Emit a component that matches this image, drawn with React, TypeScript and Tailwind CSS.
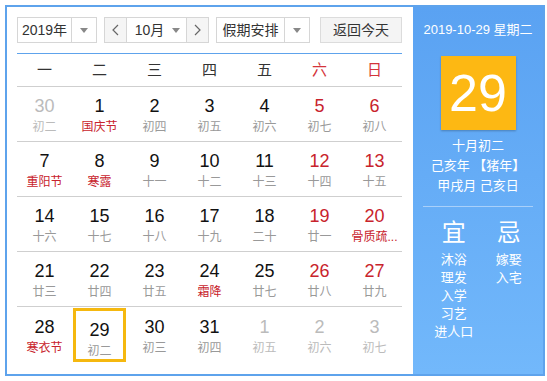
import React from "react";

type Day = { n: number; l: string; other?: boolean; red?: boolean; fest?: boolean; sel?: boolean };

const weeks: Day[][] = [
  [
    { n: 30, l: "初二", other: true },
    { n: 1, l: "国庆节", fest: true },
    { n: 2, l: "初四" },
    { n: 3, l: "初五" },
    { n: 4, l: "初六" },
    { n: 5, l: "初七", red: true },
    { n: 6, l: "初八", red: true },
  ],
  [
    { n: 7, l: "重阳节", fest: true },
    { n: 8, l: "寒露", fest: true },
    { n: 9, l: "十一" },
    { n: 10, l: "十二" },
    { n: 11, l: "十三" },
    { n: 12, l: "十四", red: true },
    { n: 13, l: "十五", red: true },
  ],
  [
    { n: 14, l: "十六" },
    { n: 15, l: "十七" },
    { n: 16, l: "十八" },
    { n: 17, l: "十九" },
    { n: 18, l: "二十" },
    { n: 19, l: "廿一", red: true },
    { n: 20, l: "骨质疏...", red: true, fest: true },
  ],
  [
    { n: 21, l: "廿三" },
    { n: 22, l: "廿四" },
    { n: 23, l: "廿五" },
    { n: 24, l: "霜降", fest: true },
    { n: 25, l: "廿七" },
    { n: 26, l: "廿八", red: true },
    { n: 27, l: "廿九", red: true },
  ],
  [
    { n: 28, l: "寒衣节", fest: true },
    { n: 29, l: "初二", sel: true },
    { n: 30, l: "初三" },
    { n: 31, l: "初四" },
    { n: 1, l: "初五", other: true },
    { n: 2, l: "初六", other: true },
    { n: 3, l: "初七", other: true },
  ],
];

const font = { fontFamily: '"Liberation Sans", "Noto Sans CJK SC", sans-serif' };

function Caret() {
  return (
    <svg width="8" height="5" viewBox="0 0 8 5">
      <path d="M0 0h8L4 5z" fill="#888" />
    </svg>
  );
}

function Chevron({ dir }: { dir: "l" | "r" }) {
  return (
    <svg width="7" height="12" viewBox="0 0 7 12">
      <path d={dir === "l" ? "M6 1L1 6l5 5" : "M1 1l5 5-5 5"} fill="none" stroke="#666" strokeWidth="1.2" />
    </svg>
  );
}

export default function App() {
  return (
    <div className="bg-white w-[547px] h-[381px] p-[5px]" style={font}>
      <div className="flex w-[540px] h-[371px] border-2 border-[#5ea3ec]">
        <div className="w-[406px] pl-[10px] pr-[11px] pt-[10px]">
          <div className="flex h-[26px] text-[14px] leading-none text-[#333]">
            <div className="flex w-[80px] border border-[#d6d6d6]">
              <div className="flex flex-1 items-center justify-center border-r border-[#d6d6d6]">2019年</div>
              <div className="flex w-[24px] items-center justify-center"><Caret /></div>
            </div>
            <div className="ml-[7px] flex w-[105px] border border-[#d6d6d6]">
              <div className="flex w-[22px] items-center justify-center border-r border-[#d6d6d6] bg-[#f5f5f5]"><Chevron dir="l" /></div>
              <div className="flex flex-1 items-center justify-center gap-[8px] pl-[2px]">10月<Caret /></div>
              <div className="flex w-[22px] items-center justify-center border-l border-[#d6d6d6] bg-[#f5f5f5]"><Chevron dir="r" /></div>
            </div>
            <div className="ml-[7px] flex w-[94px] border border-[#d6d6d6]">
              <div className="flex flex-1 items-center justify-center border-r border-[#d6d6d6]">假期安排</div>
              <div className="flex w-[24px] items-center justify-center"><Caret /></div>
            </div>
            <div className="ml-[10px] flex w-[82px] items-center justify-center border border-[#dcdcdc] bg-[#f4f4f4]">返回今天</div>
          </div>
          <div className="mt-[10px] border-t border-[#5ea3ec]" />
          <div className="grid h-[33px] grid-cols-7 border-b border-[#cfcfcf] text-[15px]">
            {["一", "二", "三", "四", "五", "六", "日"].map((w, i) => (
              <div key={w} className={`flex items-center justify-center ${i > 4 ? "text-[#d4343a]" : "text-[#333]"}`}>{w}</div>
            ))}
          </div>
          {weeks.map((wk, r) => (
            <div key={r} className={`grid h-[55px] grid-cols-7 ${r < 4 ? "border-b border-[#cfcfcf]" : ""}`}>
              {wk.map((d, c) => (
                <div key={c} className="flex items-center justify-center">
                  <div className={`flex h-[54px] w-[53px] flex-col items-center pt-[8px] ${d.sel ? "border-[3px] border-[#f5b80f] pt-[5px]" : ""}`}>
                    <div className={`text-[18px] leading-[22px] ${d.other ? "text-[#bbb]" : d.red ? "text-[#c8232c]" : "text-[#111]"}`}>{d.n}</div>
                    <div className={`mt-[2px] whitespace-nowrap text-[12px] leading-[16px] ${d.other ? "text-[#bbb]" : d.fest ? "text-[#c8232c]" : "text-[#999]"}`}>{d.l}</div>
                  </div>
                </div>
              ))}
            </div>
          ))}
        </div>
        <div className="flex w-[130px] flex-col items-center bg-gradient-to-b from-[#5aa2f2] to-[#72b8fb] text-white">
          <div className="mt-[15px] text-[13px] leading-[16px]">2019-10-29 星期二</div>
          <div className="mt-[18px] flex h-[74px] w-[75px] items-center justify-center bg-[#fdb813] text-[52px] leading-none shadow-[0_1px_2px_rgba(0,0,0,0.25)]">29</div>
          <div className="mt-[6px] text-[13px] leading-[20px]">十月初二</div>
          <div className="text-[13px] leading-[20px]">己亥年 【猪年】</div>
          <div className="text-[13px] leading-[20px]">甲戌月 己亥日</div>
          <div className="mt-[10px] w-[110px] border-t border-[#a9d0fa]" />
          <div className="mt-[12px] flex w-[110px] justify-around text-[13px] leading-[18px]">
            <div className="flex flex-col items-center">
              <div className="mb-[4px] text-[24px] leading-[28px]">宜</div>
              {["沐浴", "理发", "入学", "习艺", "进人口"].map((t) => <div key={t}>{t}</div>)}
            </div>
            <div className="flex flex-col items-center">
              <div className="mb-[4px] text-[24px] leading-[28px]">忌</div>
              {["嫁娶", "入宅"].map((t) => <div key={t}>{t}</div>)}
            </div>
          </div>
        </div>
      </div>
    </div>
  );
}
